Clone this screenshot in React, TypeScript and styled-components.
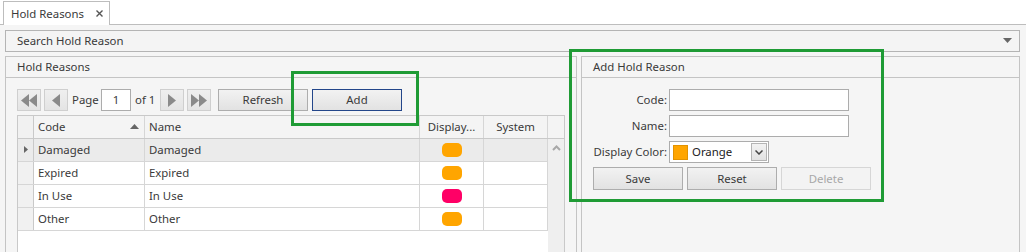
import React from "react";
import styled, { createGlobalStyle } from "styled-components";

const GlobalStyle = createGlobalStyle`
  html, body {
    margin: 0;
    padding: 0;
    background: #f5f5f5;
  }
  body {
    font-family: "Segoe UI", "Noto Sans", sans-serif;
    font-size: 11.4px;
    color: #3a3a3a;
  }
  * {
    box-sizing: border-box;
  }
`;

const Screen = styled.div`
  position: relative;
  width: 1026px;
  height: 252px;
  overflow: hidden;
  background: #f5f5f5;
  display: flex;
  flex-direction: column;
`;

const TabStrip = styled.div`
  flex: none;
  height: 25px;
  background: #fff;
  border-bottom: 1px solid #bdbdbd;
  display: flex;
  align-items: flex-end;
  padding-left: 3px;
`;

const Tab = styled.div`
  height: 24px;
  margin-bottom: -1px;
  width: 107px;
  background: #fff;
  border: 1px solid #bdbdbd;
  border-bottom: none;
  display: flex;
  align-items: center;
  padding: 0 0 1px 7px;
  gap: 12px;
`;

const Content = styled.div`
  flex: 1;
  padding: 5px 6px 0 5px;
  display: flex;
  flex-direction: column;
`;

const SearchBar = styled.div`
  height: 22px;
  border: 1px solid #b4b4b4;
  background: #f4f4f4;
  display: flex;
  align-items: center;
  justify-content: space-between;
  padding: 0 7px 1px 11px;
`;

const PanelRow = styled.div`
  margin-top: 4px;
  height: 230px;
  display: flex;
  gap: 4px;
`;

const Panel = styled.section<{ $width: number }>`
  width: ${(p) => p.$width}px;
  border: 1px solid #c4c4c4;
  display: flex;
  flex-direction: column;
`;

const PanelHeader = styled.div`
  height: 21px;
  border-bottom: 1px solid #c4c4c4;
  display: flex;
  align-items: center;
  padding: 0 0 1px 11px;
`;

const PanelBody = styled.div`
  flex: 1;
  padding: 11px 11px 0 11px;
  display: flex;
  flex-direction: column;
`;

const Toolbar = styled.div`
  height: 22px;
  display: flex;
  align-items: center;
  gap: 3px;
`;

const NavButton = styled.div`
  flex: none;
  width: 24px;
  height: 22px;
  border: 1px solid #cfcfcf;
  background: linear-gradient(#efefef, #e4e4e4);
  display: flex;
  align-items: center;
  justify-content: center;
`;

const ToolText = styled.span<{ $width: number }>`
  flex: none;
  width: ${(p) => p.$width}px;
  min-width: 0;
  white-space: nowrap;
  padding: 0 0 1px 1px;
`;

const PageInput = styled.div`
  flex: none;
  width: 30px;
  height: 22px;
  border: 1px solid #acacac;
  background: #fff;
  display: flex;
  align-items: center;
  justify-content: center;
  padding-bottom: 1px;
`;

const Button = styled.div<{ $width?: number; $focused?: boolean; $disabled?: boolean }>`
  flex: none;
  width: ${(p) => p.$width ?? 90}px;
  height: 23px;
  border: 1px solid
    ${(p) => (p.$focused ? "#23468a" : p.$disabled ? "#d6d6d6" : "#adadad")};
  background: ${(p) =>
    p.$disabled ? "#f3f3f3" : "linear-gradient(#f2f2f2, #e2e2e2)"};
  color: ${(p) => (p.$disabled ? "#a8a8a8" : "#3a3a3a")};
  display: flex;
  align-items: center;
  justify-content: center;
  padding-bottom: 1px;
`;

const ToolButton = styled(Button)<{ $gapBefore?: number }>`
  height: 22px;
  margin-left: ${(p) => p.$gapBefore ?? 0}px;
`;

const Grid = styled.div`
  margin-top: 4px;
  flex: 1;
  width: 548px;
  border: 1px solid #c9c9c9;
  display: flex;
  flex-direction: column;
  background: #fff;
`;

const GridRow = styled.div<{ $header?: boolean; $selected?: boolean }>`
  display: flex;
  height: 23px;
  border-bottom: 1px solid ${(p) => (p.$header ? "#c9c9c9" : "#d6d6d6")};
  background: ${(p) =>
    p.$header ? "#f4f4f4" : p.$selected ? "#ebebeb" : "#fff"};
`;

const Cell = styled.div<{ $width: number; $center?: boolean; $last?: boolean }>`
  width: ${(p) => p.$width}px;
  flex: none;
  border-right: ${(p) => (p.$last ? "none" : "1px solid #d6d6d6")};
  display: flex;
  align-items: center;
  justify-content: ${(p) => (p.$center ? "center" : "flex-start")};
  padding: 0 ${(p) => (p.$center ? 0 : 4)}px 1px;
  white-space: nowrap;
  overflow: hidden;
`;

const RowHead = styled(Cell)<{ $tinted?: boolean }>`
  background: ${(p) => (p.$tinted ? "#ebebeb" : "#f1f1f1")};
  border-right-color: #c9c9c9;
  justify-content: center;
  padding: 0 0 1px;
`;

const HeaderCode = styled(Cell)`
  justify-content: space-between;
  padding-right: 5px;
`;

const GridBody = styled.div`
  flex: 1;
  display: flex;
`;

const Rows = styled.div`
  width: 530px;
  display: flex;
  flex-direction: column;
`;

const ScrollTrack = styled.div`
  flex: 1;
  background: #efefef;
  display: flex;
  justify-content: center;
  padding-top: 6px;
`;

const Swatch = styled.div<{ $color: string }>`
  width: 20px;
  height: 14px;
  border-radius: 5px;
  background: ${(p) => p.$color};
`;

const Form = styled.div`
  display: grid;
  grid-template-columns: 74px auto;
  column-gap: 2px;
  row-gap: 4px;
  align-items: center;
`;

const Label = styled.label`
  text-align: right;
  white-space: nowrap;
  padding-bottom: 1px;
`;

const TextInput = styled.div`
  width: 180px;
  height: 22px;
  border: 1px solid #acacac;
  background: #fff;
`;

const Combo = styled.div`
  width: 100px;
  height: 22px;
  border: 1px solid #acacac;
  background: #fff;
  display: flex;
  align-items: center;
  padding: 0 1px 0 3px;
  gap: 4px;
`;

const ColorChip = styled.div<{ $color: string }>`
  width: 15px;
  height: 15px;
  background: ${(p) => p.$color};
  border: 1px solid #e29200;
`;

const ComboText = styled.span`
  flex: 1;
  padding-bottom: 1px;
  color: #222;
`;

const ComboButton = styled.div`
  width: 16px;
  height: 18px;
  border: 1px solid #b4b4b4;
  background: linear-gradient(#f2f2f2, #e2e2e2);
  display: flex;
  align-items: center;
  justify-content: center;
`;

const ButtonRow = styled.div`
  grid-column: 1 / -1;
  display: flex;
  gap: 4px;
`;

const Highlight = styled.div<{ $x: number; $y: number; $w: number; $h: number }>`
  position: absolute;
  left: ${(p) => p.$x}px;
  top: ${(p) => p.$y}px;
  width: ${(p) => p.$w}px;
  height: ${(p) => p.$h}px;
  border: 3px solid #1f9b35;
  pointer-events: none;
`;

const Tri = ({ dir }: { dir: "l" | "r" }) => (
  <svg width={8} height={13} viewBox="0 0 8 13">
    <polygon points={dir === "l" ? "8,0 8,13 0,6.5" : "0,0 0,13 8,6.5"} fill="#8a8a8a" />
  </svg>
);

const DoubleTri = ({ dir }: { dir: "l" | "r" }) => (
  <svg width={16} height={13} viewBox="0 0 16 13">
    {dir === "l" ? (
      <>
        <polygon points="8,0 8,13 0,6.5" fill="#8a8a8a" />
        <polygon points="16,0 16,13 8,6.5" fill="#8a8a8a" />
      </>
    ) : (
      <>
        <polygon points="0,0 0,13 8,6.5" fill="#8a8a8a" />
        <polygon points="8,0 8,13 16,6.5" fill="#8a8a8a" />
      </>
    )}
  </svg>
);

const rows = [
  { code: "Damaged", name: "Damaged", color: "#ffa500" },
  { code: "Expired", name: "Expired", color: "#ffa500" },
  { code: "In Use", name: "In Use", color: "#ff0066" },
  { code: "Other", name: "Other", color: "#ffa500" },
];

export default function App() {
  return (
    <Screen>
      <GlobalStyle />
      <TabStrip>
        <Tab>
          <span>Hold Reasons</span>
          <svg width={7} height={7} viewBox="0 0 7 7">
            <path d="M0.5 0.5 L6.5 6.5 M6.5 0.5 L0.5 6.5" stroke="#555" strokeWidth={1.4} />
          </svg>
        </Tab>
      </TabStrip>
      <Content>
        <SearchBar>
          <span>Search Hold Reason</span>
          <svg width={9} height={5} viewBox="0 0 9 5">
            <polygon points="0,0 9,0 4.5,5" fill="#666" />
          </svg>
        </SearchBar>
        <PanelRow>
          <Panel $width={572}>
            <PanelHeader>Hold Reasons</PanelHeader>
            <PanelBody>
              <Toolbar>
                <NavButton>
                  <DoubleTri dir="l" />
                </NavButton>
                <NavButton>
                  <Tri dir="l" />
                </NavButton>
                <ToolText $width={27}>Page</ToolText>
                <PageInput>1</PageInput>
                <ToolText $width={23}>of 1</ToolText>
                <NavButton>
                  <Tri dir="r" />
                </NavButton>
                <NavButton>
                  <DoubleTri dir="r" />
                </NavButton>
                <ToolButton $gapBefore={4}>Refresh</ToolButton>
                <ToolButton $width={90} $gapBefore={1} $focused>
                  Add
                </ToolButton>
              </Toolbar>
              <Grid>
                <GridRow $header>
                  <RowHead $width={16} />
                  <HeaderCode $width={111}>
                    <span>Code</span>
                    <svg width={9} height={5} viewBox="0 0 9 5">
                      <polygon points="0,5 9,5 4.5,0" fill="#666" />
                    </svg>
                  </HeaderCode>
                  <Cell $width={275}>Name</Cell>
                  <Cell $width={64} $center>
                    Display...
                  </Cell>
                  <Cell $width={64} $center>
                    System
                  </Cell>
                  <Cell $width={16} $last />
                </GridRow>
                <GridBody>
                  <Rows>
                    {rows.map((r, i) => (
                      <GridRow key={r.code} $selected={i === 0}>
                        <RowHead $width={16} $tinted={i === 0}>
                          {i === 0 && (
                            <svg width={4} height={7} viewBox="0 0 4 7">
                              <polygon points="0,0 4,3.5 0,7" fill="#666" />
                            </svg>
                          )}
                        </RowHead>
                        <Cell $width={111}>{r.code}</Cell>
                        <Cell $width={275}>{r.name}</Cell>
                        <Cell $width={64} $center>
                          <Swatch $color={r.color} />
                        </Cell>
                        <Cell $width={64} />
                      </GridRow>
                    ))}
                  </Rows>
                  <ScrollTrack>
                    <svg width={9} height={6} viewBox="0 0 9 6">
                      <polyline points="1,5 4.5,1.5 8,5" fill="none" stroke="#a8a8a8" strokeWidth={2} />
                    </svg>
                  </ScrollTrack>
                </GridBody>
              </Grid>
            </PanelBody>
          </Panel>
          <Panel $width={440}>
            <PanelHeader>Add Hold Reason</PanelHeader>
            <PanelBody>
              <Form>
                <Label>Code:</Label>
                <TextInput />
                <Label>Name:</Label>
                <TextInput />
                <Label>Display Color:</Label>
                <Combo>
                  <ColorChip $color="#ffa500" />
                  <ComboText>Orange</ComboText>
                  <ComboButton>
                    <svg width={8} height={5} viewBox="0 0 8 5">
                      <polyline points="0.5,0.5 4,4 7.5,0.5" fill="none" stroke="#444" strokeWidth={1.5} />
                    </svg>
                  </ComboButton>
                </Combo>
                <ButtonRow>
                  <Button>Save</Button>
                  <Button>Reset</Button>
                  <Button $disabled>Delete</Button>
                </ButtonRow>
              </Form>
            </PanelBody>
          </Panel>
        </PanelRow>
      </Content>
      <Highlight $x={569} $y={49} $w={315} $h={153} />
      <Highlight $x={291} $y={71} $w={128} $h={55} />
    </Screen>
  );
}
